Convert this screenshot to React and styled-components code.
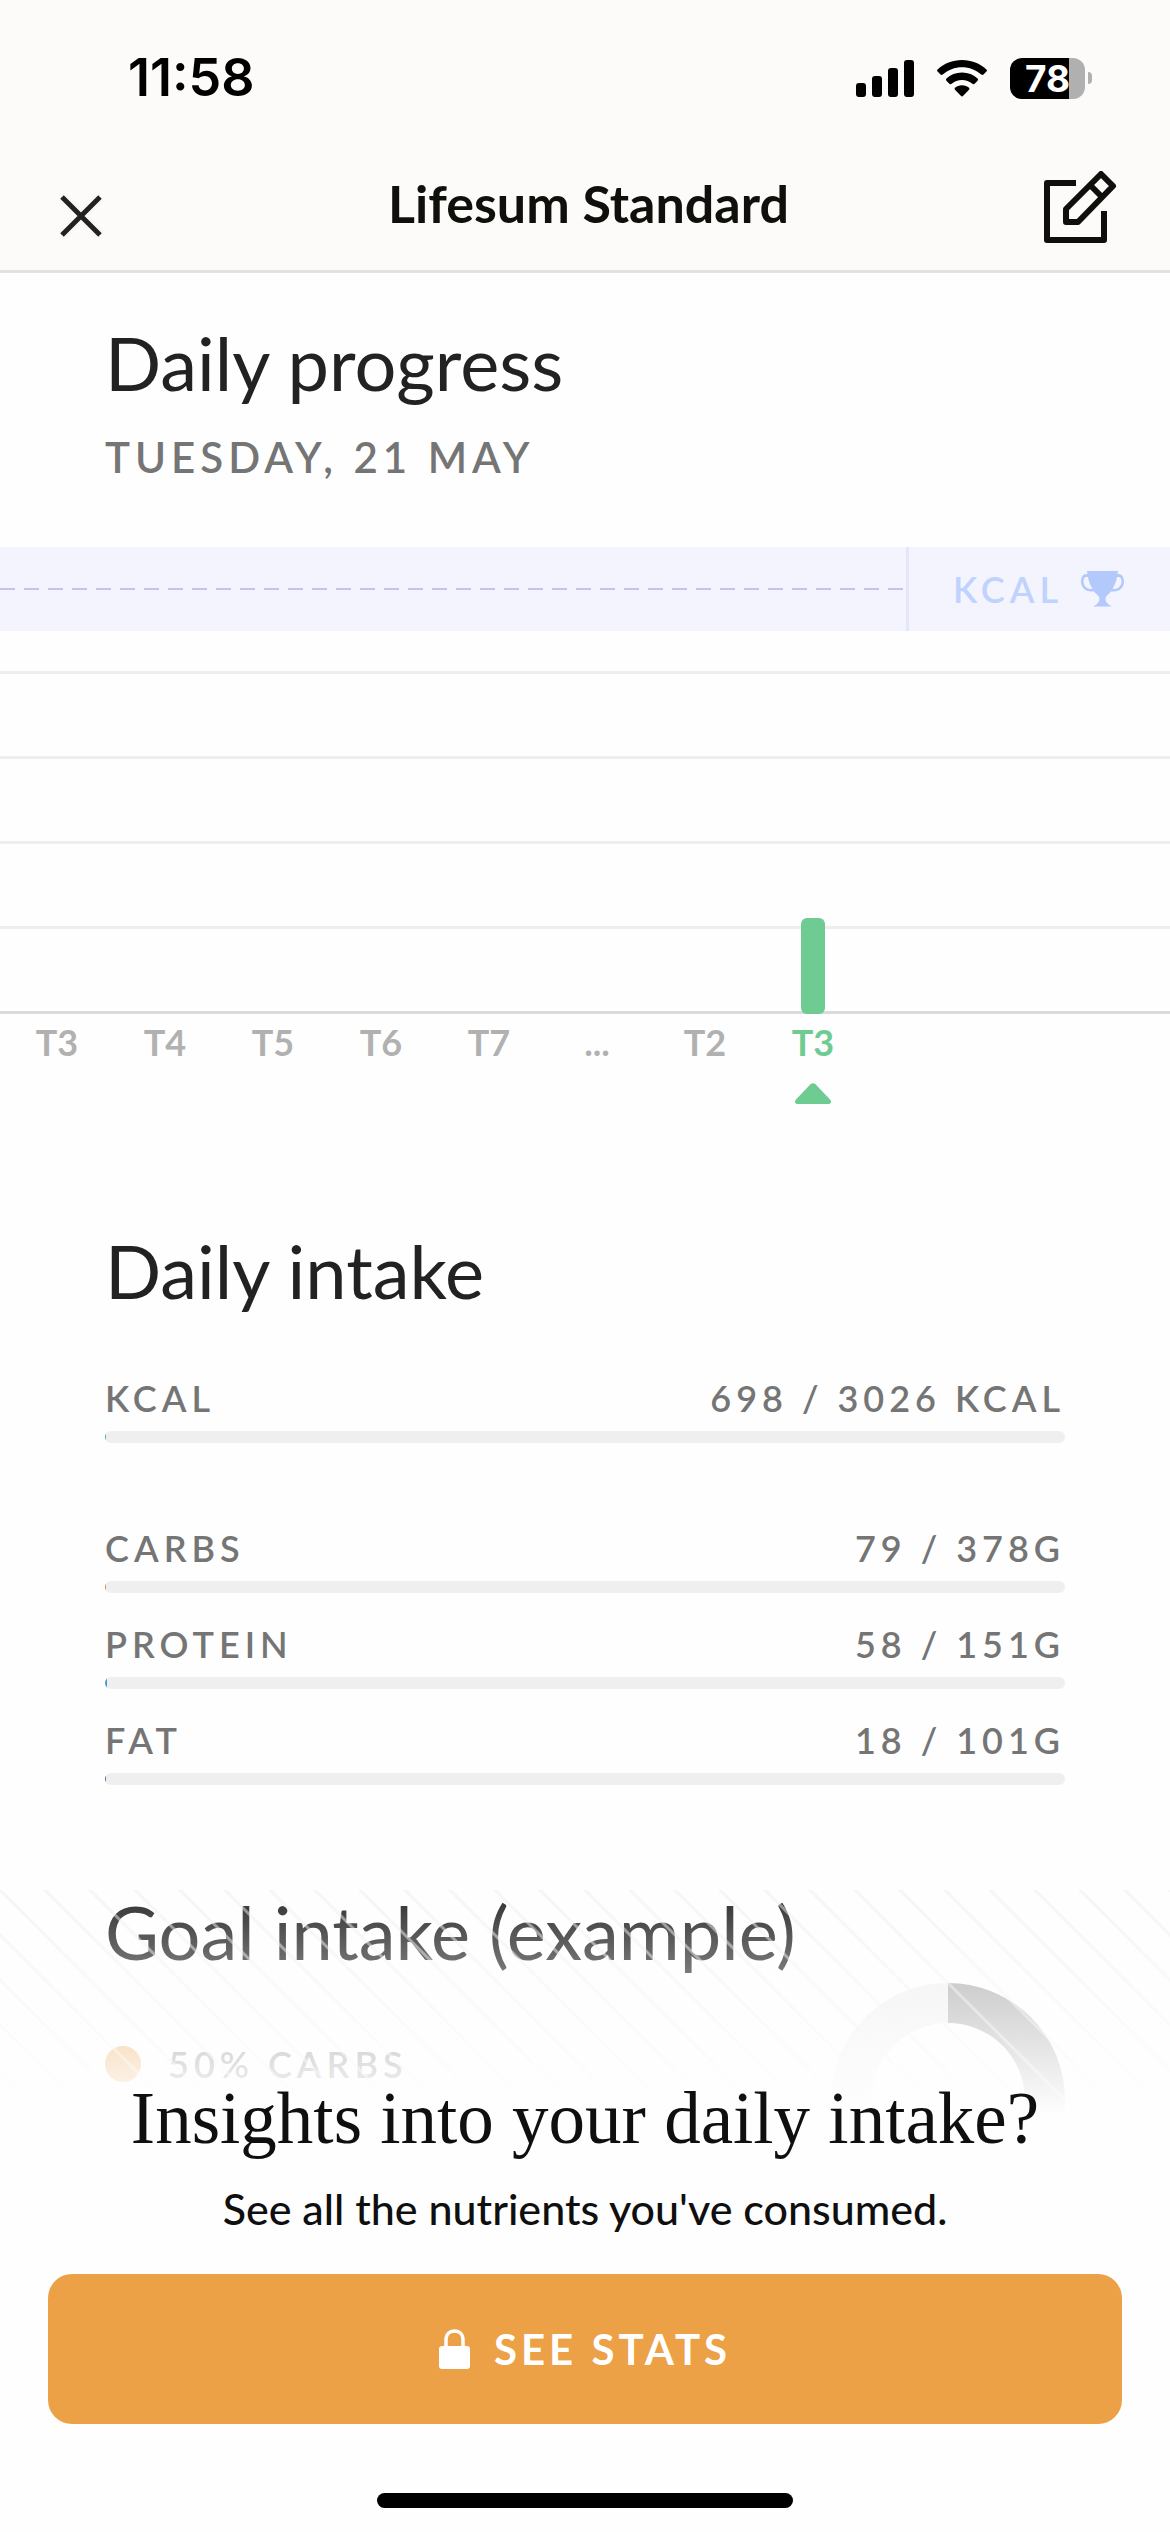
import React from "react";
import styled, { createGlobalStyle } from "styled-components";

const GlobalStyle = createGlobalStyle`
  *, *::before, *::after { box-sizing: border-box; }
  body {
    margin: 0;
    background: #fefefe;
    color: #222;
    font-family: Lato, "Open Sans", sans-serif;
  }
  h1, h2, p, ul { margin: 0; padding: 0; font-weight: 400; }
  button { font: inherit; border: 0; padding: 0; background: none; cursor: pointer; }
  svg { display: block; flex: none; }
`;

const Screen = styled.div`
  display: flex;
  flex-direction: column;
  overflow: hidden;
`;

const TopArea = styled.header`
  background: #fcfbf9;
  border-bottom: 3px solid #e3e2dc;
`;

const StatusBar = styled.div`
  display: flex;
  align-items: center;
  justify-content: space-between;
  height: 156px;
  padding: 0 78px 0 128px;
  color: #000;
`;

const Clock = styled.time`
  font: 600 52px/60px Inter, sans-serif;
`;

const StatusIcons = styled.div`
  display: flex;
  align-items: center;
  gap: 23px;
`;

const Battery = styled.div`
  display: flex;
  align-items: center;
  gap: 3px;
`;

const BatteryBody = styled.div`
  width: 75px;
  height: 41px;
  padding-right: 15px;
  border-radius: 12px;
  background: linear-gradient(90deg, #000 ${(p) => p.$level}%, #b0b0b0 ${(p) => p.$level}%);
  color: #fff;
  font: 700 37px/41px Inter, sans-serif;
  text-align: right;
`;

const BatteryTip = styled.div`
  width: 4px;
  height: 12px;
  border-radius: 0 6px 6px 0;
  background: #b0b0b0;
`;

const NavBar = styled.div`
  display: grid;
  grid-template-columns: 1fr auto 1fr;
  height: 114px;
  padding: 15px 53px 0 60px;
`;

const NavTitle = styled.h1`
  color: #0f0f0b;
  font-size: 52px;
  font-weight: 700;
  line-height: 64px;
`;

const IconButton = styled.button`
  display: flex;
  align-self: start;
  justify-self: ${(p) => p.$side};
  padding-top: ${(p) => (p.$side === "start" ? "24px" : "0")};
`;

const Heading = styled.h2`
  font-size: 74px;
  line-height: 84px;
`;

const Caption = styled.p`
  color: #757575;
  font-size: 42px;
  font-weight: 600;
  letter-spacing: 5px;
  line-height: 48px;
`;

const Intro = styled.section`
  display: flex;
  flex-direction: column;
  gap: 28px;
  padding: 48px 105px 66px;
`;

const GoalBand = styled.div`
  display: flex;
  height: 84px;
  background: #f3f4fd;
`;

const GoalLine = styled.div`
  flex: 1;
  display: flex;
  align-items: center;
  padding-right: 3px;

  &::before {
    content: "";
    flex: 1;
    height: 2px;
    background: repeating-linear-gradient(90deg, #c5c2f0 0 15px, transparent 15px 24px);
  }
`;

const GoalTag = styled.div`
  display: flex;
  align-items: center;
  gap: 18px;
  width: 264px;
  padding-left: 44px;
  border-left: 3px solid #e5e6fa;
`;

const Label = styled.span`
  color: ${(p) => p.$color || "#757575"};
  font-size: 36px;
  font-weight: 600;
  letter-spacing: 5px;
  line-height: 44px;
`;

const Plot = styled.div`
  display: grid;
  padding-top: 40px;
  > * { grid-area: 1 / 1; }
`;

const GridLines = styled.div`
  border-bottom: 3px solid #dadada;
`;

const GridLine = styled.div`
  height: 85px;
  border-top: 3px solid #eee;
`;

const Columns = styled.div`
  display: grid;
  grid-template-columns: repeat(8, 108px);
  align-items: end;
  justify-items: center;
  padding-left: 3px;
`;

const Bar = styled.div`
  grid-column: 8;
  width: 24px;
  border-radius: 6px;
  background: #6ecb92;
`;

const Ticks = styled(Columns)`
  align-items: start;
  padding-top: 6px;
`;

const Tick = styled.button`
  display: flex;
  flex-direction: column;
  align-items: center;
  gap: 19px;
  color: ${(p) => (p.$active ? "#6ecb92" : "#b1b1b1")};
  font-size: 36px;
  font-weight: 700;
  line-height: 44px;
`;

const Intake = styled.section`
  padding: 125px 105px 105px;
`;

const IntakeList = styled.ul`
  display: flex;
  flex-direction: column;
  gap: 29px;
  padding-top: 63px;
  list-style: none;
`;

const IntakeItem = styled.li`
  display: flex;
  flex-direction: column;
  gap: 11px;
  padding-bottom: ${(p) => (p.$lead ? "54px" : "0")};
`;

const IntakeText = styled.div`
  display: flex;
  justify-content: space-between;
`;

const Track = styled.div`
  height: 12px;
  border-radius: 6px;
  overflow: hidden;
  background: #efefef;
`;

const TrackFill = styled.div`
  width: ${(p) => p.$width}px;
  height: 100%;
  background: ${(p) => p.$color};
`;

const Locked = styled.section`
  display: grid;
  > * { grid-area: 1 / 1; min-width: 0; }
`;

const GoalPreview = styled.div`
  padding: 0 105px;
`;

const GoalBody = styled.div`
  display: flex;
  justify-content: space-between;
  padding-top: 9px;
`;

const Legend = styled.div`
  display: flex;
  align-items: center;
  align-self: start;
  gap: 27px;
  padding-top: 59px;
`;

const Dot = styled.span`
  width: 36px;
  height: 36px;
  border-radius: 50%;
  background: #eca147;
`;

const Paywall = styled.div`
  position: relative;
  display: flex;
  flex-direction: column;
  align-items: center;
  padding: 187px 48px 24px;
  background:
    linear-gradient(rgba(254, 254, 254, 0.05), #fefefe 225px),
    linear-gradient(
      45deg,
      rgba(236, 236, 236, 0.5) 0 1px,
      transparent 2px calc(50% - 2px),
      rgba(236, 236, 236, 0.5) calc(50% - 1px) calc(50% + 1px),
      transparent calc(50% + 2px) calc(100% - 2px),
      rgba(236, 236, 236, 0.5) calc(100% - 1px)
    ) 0 0 / 45px 45px;
`;

const PaywallTitle = styled.h2`
  color: #0f0f0f;
  font: 400 73px/84px "Liberation Serif", serif;
`;

const PaywallText = styled.p`
  padding: 22px 0 39px;
  color: #0f0f0f;
  font-size: 43px;
  font-weight: 500;
  line-height: 52px;
`;

const StatsButton = styled.button`
  display: flex;
  align-items: center;
  justify-content: center;
  gap: 24px;
  width: 100%;
  height: 150px;
  border-radius: 24px;
  background: #eca147;
  color: #fff;
  font-size: 42px;
  font-weight: 700;
  letter-spacing: 4px;
`;

const HomeIndicator = styled.div`
  width: 416px;
  height: 15px;
  margin-top: 69px;
  border-radius: 8px;
  background: #000;
`;

const SignalIcon = () => (
  <svg width="58" height="37" viewBox="0 0 58 37" aria-hidden="true">
    <rect x="0" y="23" width="10" height="14" rx="3" />
    <rect x="16" y="16" width="10" height="21" rx="3" />
    <rect x="32" y="8" width="10" height="29" rx="3" />
    <rect x="48" y="0" width="10" height="37" rx="3" />
  </svg>
);

const WifiIcon = () => (
  <svg width="50" height="37" viewBox="0 0 50 37" aria-hidden="true">
    <path d="M25 0C34.500 0 43 3.500 49.400 9.400Q50.500 10.500 49.400 11.600L46.500 14.600Q45.400 15.500 44.300 14.600C39 9.800 32.300 7.200 25 7.200S11 9.800 5.700 14.600Q4.600 15.500 3.500 14.600L0.600 11.600Q-0.500 10.500 0.600 9.400C7 3.500 15.500 0 25 0Z" />
    <path d="M25 12.500C31.200 12.500 36.500 14.800 40.600 18.600Q41.600 19.600 40.600 20.700L37.600 23.700Q36.500 24.700 35.400 23.800C32.500 21.300 29 19.900 25 19.900S17.500 21.300 14.600 23.800Q13.500 24.700 12.400 23.700L9.400 20.700Q8.400 19.600 9.400 18.600C13.500 14.800 18.800 12.500 25 12.500Z" />
    <path d="M25 25.200C28 25.200 30.200 26.200 32 27.700Q33 28.700 32 29.800L26.200 35.800Q25 37 23.800 35.800L18 29.800Q17 28.700 18 27.700C19.800 26.200 22 25.200 25 25.200Z" />
  </svg>
);

const CloseIcon = () => (
  <svg width="42" height="42" viewBox="0 0 42 42" fill="none" stroke="#222" strokeWidth="5" aria-hidden="true">
    <path d="M2 2L40 40M40 2L2 40" />
  </svg>
);

const EditIcon = () => (
  <svg width="73" height="73" viewBox="0 0 73 73" fill="none" stroke="#0f0f0b" strokeWidth="6" strokeLinejoin="round" aria-hidden="true">
    <path d="M32 12H3V69H60V40" />
    <path d="M57 3L69 15L34 51H22V38Z" />
    <path d="M46 14L58 26" />
  </svg>
);

const TrophyIcon = () => (
  <svg width="43" height="36" viewBox="0 0 43 36" aria-hidden="true">
    <path
      fill="#b3c9fb"
      fillRule="evenodd"
      d="M6 0H37L36.500 3H37.500C41 3 43 6.500 43 10.500C43 16.500 38.500 20.500 33 20.500H30C27 24 24.500 25 24.500 28C24.500 31.500 27.500 33.500 31 35.500H12C15.500 33.500 18.500 31.500 18.500 28C18.500 25 16 24 13 20.500H10C4.500 20.500 0 16.500 0 10.500C0 6.500 2 3 5.500 3H6.500ZM7 6H5.500C3.500 6 2.500 8 2.500 10.500C2.500 15 6 18 10 18H11.500C9.500 14.500 7.800 11 7 6ZM36 6C35.200 11 33.500 14.500 31.500 18H33C37 18 40.500 15 40.500 10.500C40.500 8 39.500 6 37.500 6Z"
    />
  </svg>
);

const Marker = () => (
  <svg width="36" height="21" viewBox="0 0 36 21" aria-hidden="true">
    <path d="M15.500 1.300Q18 -1 20.500 1.300L35 16.500C37 18.700 36 21 33 21H3C0 21 -1 18.700 1 16.500Z" fill="#6ecb92" />
  </svg>
);

const DonutChart = () => (
  <svg width="234" height="234" viewBox="0 0 234 234" fill="none" strokeWidth="40" aria-hidden="true">
    <path d="M117 214A97 97 0 0 1 117 20" stroke="#f0f0f0" />
    <path d="M117 20A97 97 0 0 1 117 214" stroke="#a6a6a6" />
  </svg>
);

const LockIcon = () => (
  <svg width="31" height="40" viewBox="0 0 31 40" aria-hidden="true">
    <rect x="0" y="17" width="31" height="23" rx="3" fill="#fff" />
    <path d="M7 19V11C7 5.500 10.500 2 15.500 2S24 5.500 24 11V19" fill="none" stroke="#fff" strokeWidth="3.500" />
  </svg>
);

const days = ["T3", "T4", "T5", "T6", "T7", "...", "T2", "T3"];

const intake = [
  { name: "KCAL", value: "698 / 3026 KCAL", fill: 1, color: "#4fa67a", lead: true },
  { name: "CARBS", value: "79 / 378G", fill: 1, color: "#d08c2e" },
  { name: "PROTEIN", value: "58 / 151G", fill: 2, color: "#4a97c4" },
  { name: "FAT", value: "18 / 101G", fill: 1, color: "#6a5aa0" },
];

export default function App() {
  return (
    <Screen>
      <GlobalStyle />
      <TopArea>
        <StatusBar>
          <Clock>11:58</Clock>
          <StatusIcons>
            <SignalIcon />
            <WifiIcon />
            <Battery>
              <BatteryBody $level={79}>78</BatteryBody>
              <BatteryTip />
            </Battery>
          </StatusIcons>
        </StatusBar>
        <NavBar>
          <IconButton $side="start" aria-label="Close">
            <CloseIcon />
          </IconButton>
          <NavTitle>Lifesum Standard</NavTitle>
          <IconButton $side="end" aria-label="Edit">
            <EditIcon />
          </IconButton>
        </NavBar>
      </TopArea>

      <main>
        <Intro>
          <Heading>Daily progress</Heading>
          <Caption>TUESDAY, 21 MAY</Caption>
        </Intro>

        <section aria-label="Calories per day">
          <GoalBand>
            <GoalLine />
            <GoalTag>
              <Label $color="#bfd3fd">KCAL</Label>
              <TrophyIcon />
            </GoalTag>
          </GoalBand>
          <Plot>
            <GridLines>
              <GridLine />
              <GridLine />
              <GridLine />
              <GridLine />
            </GridLines>
            <Columns>
              <Bar style={{ height: 96 }} />
            </Columns>
          </Plot>
          <Ticks>
            {days.map((day, i) => {
              const active = i === days.length - 1;
              return (
                <Tick key={i} $active={active}>
                  {day}
                  {active && <Marker />}
                </Tick>
              );
            })}
          </Ticks>
        </section>

        <Intake>
          <Heading>Daily intake</Heading>
          <IntakeList>
            {intake.map((item) => (
              <IntakeItem key={item.name} $lead={item.lead}>
                <IntakeText>
                  <Label>{item.name}</Label>
                  <Label>{item.value}</Label>
                </IntakeText>
                <Track>
                  <TrackFill $width={item.fill} $color={item.color} />
                </Track>
              </IntakeItem>
            ))}
          </IntakeList>
        </Intake>

        <Locked>
          <GoalPreview>
            <Heading>Goal intake (example)</Heading>
            <GoalBody>
              <Legend>
                <Dot />
                <Label>50% CARBS</Label>
              </Legend>
              <DonutChart />
            </GoalBody>
          </GoalPreview>
          <Paywall>
            <PaywallTitle>Insights into your daily intake?</PaywallTitle>
            <PaywallText>See all the nutrients you've consumed.</PaywallText>
            <StatsButton>
              <LockIcon />
              SEE STATS
            </StatsButton>
            <HomeIndicator />
          </Paywall>
        </Locked>
      </main>
    </Screen>
  );
}
